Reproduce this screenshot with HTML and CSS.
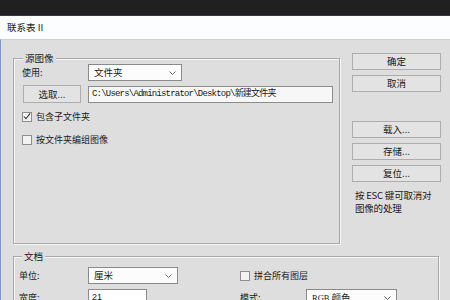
FILE: index.html
```html
<!DOCTYPE html>
<html lang="zh-CN">
<head>
    <meta charset="UTF-8">
    <title>联系表 II</title>
    <link rel="stylesheet" href="styles.css">
</head>
<body>

    <div class="topbar"></div>
    <div class="titlebar">联系表 II</div>

    <div class="dialog">
        <div class="main">
            <fieldset class="group source">
                <legend>源图像</legend>
                <div class="row">
                    <span class="lbl">使用:</span>
                    <div class="select sel-use">文件夹
                        <svg class="chev" width="7" height="4" viewBox="0 0 7 4"><polyline points="0.5,0.5 3.5,3.5 6.5,0.5" fill="none" stroke="#666" stroke-width="1"/></svg>
                    </div>
                </div>
                <div class="row pick-row">
                    <button class="btn pick">选取...</button>
                    <div class="field path">C:\Users\Administrator\Desktop\新建文件夹</div>
                </div>
                <div class="check first">
                    <span class="box"><svg width="9" height="9" viewBox="0 0 9 9"><polyline points="1,4.5 3.3,7 8,1" fill="none" stroke="#333" stroke-width="1.2"/></svg></span>包含子文件夹
                </div>
                <div class="check second">
                    <span class="box"></span>按文件夹编组图像
                </div>
            </fieldset>

            <div class="side">
                <button class="btn">确定</button>
                <button class="btn">取消</button>
                <button class="btn gap">载入...</button>
                <button class="btn">存储...</button>
                <button class="btn">复位...</button>
                <p class="hint">按 ESC 键可取消对<br>图像的处理</p>
            </div>
        </div>

        <fieldset class="group doc">
            <legend>文档</legend>
            <div class="row">
                <span class="lbl">单位:</span>
                <div class="select sel-unit">厘米
                    <svg class="chev" width="7" height="4" viewBox="0 0 7 4"><polyline points="0.5,0.5 3.5,3.5 6.5,0.5" fill="none" stroke="#666" stroke-width="1"/></svg>
                </div>
                <div class="check flat"><span class="box"></span>拼合所有图层</div>
            </div>
            <div class="row doc-row2">
                <span class="lbl">宽度:</span>
                <div class="field width">21</div>
                <span class="lbl mode">模式:</span>
                <div class="select sel-mode"><span class="mono">RGB</span>&nbsp;颜色
                    <svg class="chev" width="7" height="4" viewBox="0 0 7 4"><polyline points="0.5,0.5 3.5,3.5 6.5,0.5" fill="none" stroke="#666" stroke-width="1"/></svg>
                </div>
            </div>
        </fieldset>
    </div>

</body>
</html>
```

FILE: styles.css
```css
body {
    margin: 0;
    width: 450px;
    height: 300px;
    overflow: hidden;
    background: #dedede;
    font-family: "Noto Sans CJK SC", "Noto Sans", sans-serif;
    font-size: 9px;
    color: #1a1a1a;
}
.topbar {
    height: 15px;
    background: #202020;
    border-bottom: 1px solid #2c3a4c;
}
.titlebar {
    height: 23px;
    line-height: 23px;
    padding-left: 7px;
    background: #fbfdff;
    font-size: 9.5px;
    color: #222;
}
.dialog {
    height: 261px;
    padding: 13px 0 0 12px;
    border-left: 1px solid #7c9bc2;
    border-top: 1px solid #d0d0d0;
    box-sizing: border-box;
}
.main {
    display: flex;
    align-items: flex-start;
}
.group {
    margin: 0;
    border: 1px solid #a9a9a9;
    box-shadow: inset 1px 1px 0 #f6f6f6, 1px 1px 0 #f6f6f6;
    box-sizing: border-box;
}
.group legend {
    padding: 0 2px;
    line-height: 11px;
    font-size: 9.5px;
    background: #dedede;
}
.source {
    width: 326px;
    height: 191px;
    padding: 0 6px 0 8px;
}
.source legend {
    margin-left: 1px;
}
.row {
    display: flex;
    align-items: center;
}
.lbl {
    width: 66px;
    flex: none;
}
.select {
    position: relative;
    height: 17px;
    line-height: 15px;
    padding-left: 5px;
    background: #fcfcfc;
    border: 1px solid #8a8a8a;
    box-sizing: border-box;
    font-size: 9.5px;
}
.chev {
    position: absolute;
    right: 5px;
    top: 6px;
}
.sel-use {
    width: 94px;
}
.pick-row {
    margin-top: 4px;
    gap: 7px;
}
.btn {
    display: block;
    height: 17px;
    padding: 0;
    background: #e3e3e3;
    border: 1px solid #adadad;
    font-family: inherit;
    font-size: 9.5px;
    color: #1a1a1a;
    line-height: 15px;
}
.pick {
    width: 58px;
    height: 18px;
    margin-left: 1px;
}
.field {
    height: 17px;
    line-height: 15px;
    padding-left: 3px;
    background: #f7f7f7;
    border: 1px solid #8c8c8c;
    box-sizing: border-box;
}
.path {
    width: 245px;
    font-family: "Liberation Mono", "Noto Sans CJK SC", monospace;
    letter-spacing: -0.8px;
    font-size: 9px;
}
.check {
    display: flex;
    align-items: center;
    height: 11px;
    gap: 4px;
}
.check.first {
    margin-top: 8px;
}
.check.second {
    margin-top: 12px;
}
.box {
    width: 10px;
    height: 10px;
    flex: none;
    background: #f3f3f3;
    border: 1px solid #8e8e8e;
    box-sizing: border-box;
    display: flex;
    align-items: center;
    justify-content: center;
}
.side {
    width: 89px;
    margin-left: 12px;
    display: flex;
    flex-direction: column;
    gap: 5px;
}
.side .btn {
    width: 89px;
}
.side .gap {
    margin-top: 24px;
}
.hint {
    margin: 2px 0 0 3px;
    line-height: 13px;
    font-size: 9.5px;
    letter-spacing: -0.2px;
}
.doc {
    width: 426px;
    height: 60px;
    margin-top: 7px;
    padding: 5px 6px 0 5px;
}
.doc legend {
    margin-left: 3px;
}
.doc .lbl {
    width: 69px;
}
.sel-unit {
    width: 90px;
}
.flat {
    margin-left: 62px;
}
.doc-row2 {
    margin-top: 5px;
}
.width {
    width: 59px;
    background: #fff;
    font-family: "Liberation Sans", sans-serif;
}
.doc .mode {
    width: 66px;
    margin-left: 93px;
}
.sel-mode {
    width: 91px;
}
.mono {
    font-family: "Liberation Serif", serif;
    font-size: 8.5px;
}
```
